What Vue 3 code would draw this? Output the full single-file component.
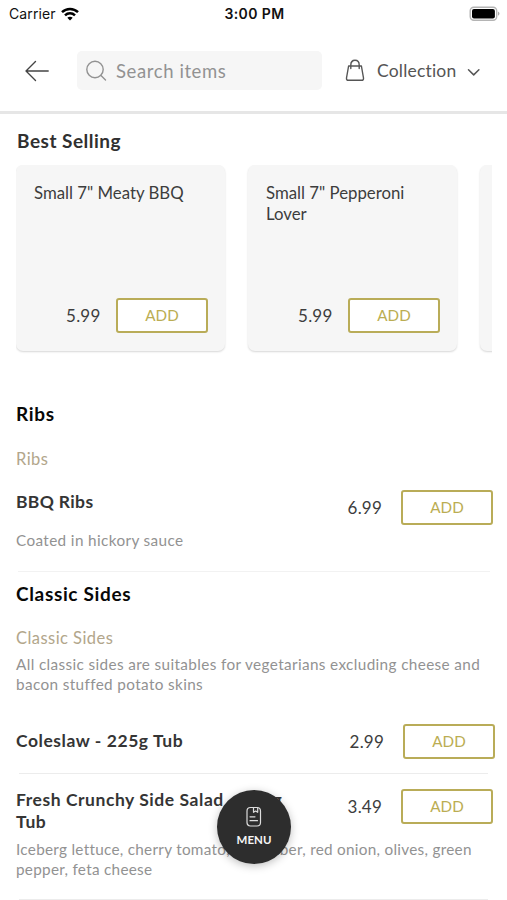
<script setup>
const bestSelling = [
  { name: 'Small 7" Meaty BBQ', price: '5.99' },
  { name: 'Small 7" Pepperoni Lover', price: '5.99' },
]
</script>

<template>
  <div class="screen">
    <div class="status">
      <div class="carrier">
        <span>Carrier</span>
        <svg class="wifi" width="18" height="14" viewBox="0 0 18 14">
          <g fill="none" stroke="#000" stroke-width="2.5">
            <path d="M1 5.1C5.5.8 12.500.8 17 5.100" />
            <path d="M4 8.300C6.800 5.600 11.200 5.600 14 8.300" />
          </g>
          <path d="M9 13.600 6.300 10.800C7.800 9.400 10.200 9.400 11.700 10.800Z" />
        </svg>
      </div>
      <div class="time">3:00 PM</div>
      <div class="power">
        <svg width="31" height="16" viewBox="0 0 31 16">
          <rect x="1.200" y="1.200" width="26.500" height="13" rx="3.600" fill="#fff" stroke="#b4b4b4" stroke-width="1.400" />
          <rect x="3" y="3" width="22.900" height="9.400" rx="2" />
          <path d="M29 5.600C31 6.400 31 9 29 9.800Z" fill="#aaa" />
        </svg>
      </div>
    </div>

    <header class="bar">
      <svg class="back" width="26" height="24" viewBox="0 0 26 24" fill="none" stroke="#444" stroke-width="1.400" stroke-linecap="round" stroke-linejoin="round">
        <path d="M24.200 12H2M11.500 2.400 2 12l9.500 9.500" />
      </svg>
      <div class="search">
        <svg width="22" height="22" viewBox="0 0 22 22" fill="none" stroke="#929292" stroke-width="1.400" stroke-linecap="round">
          <circle cx="9" cy="9.500" r="8.200" />
          <path d="M15 15.400 19.500 19.900" />
        </svg>
        <span>Search items</span>
      </div>
      <div class="collection">
        <svg class="bag" width="20" height="24" viewBox="0 0 20 24" fill="none" stroke="#555" stroke-width="1.400" stroke-linecap="round" stroke-linejoin="round">
          <path d="M3.600 7H16.400L18.500 19Q18.700 21.300 16.700 21.300H3.300Q1.300 21.300 1.500 19Z" />
          <path d="M5.800 9.600V6C5.800-.4 14.200-.4 14.200 6V9.600" />
        </svg>
        <span class="mode">Collection</span>
        <svg class="chevron" width="14" height="9" viewBox="0 0 14 9" fill="none" stroke="#555" stroke-width="1.500" stroke-linecap="round" stroke-linejoin="round">
          <path d="m1.500 1.700 5.200 5.200 5.200-5.200" />
        </svg>
      </div>
    </header>

    <main>
      <h2 class="best">Best Selling</h2>
      <div class="cards">
        <article v-for="item in bestSelling" :key="item.name" class="card">
          <div class="card-name">{{ item.name }}</div>
          <div class="buy">
            <span class="price">{{ item.price }}</span>
            <button class="add">ADD</button>
          </div>
        </article>
        <article class="card"></article>
      </div>

      <section class="ribs">
        <h2>Ribs</h2>
        <h3>Ribs</h3>
        <div class="item">
          <div class="name bbq">BBQ Ribs</div>
          <div class="buy">
            <span class="price">6.99</span>
            <button class="add">ADD</button>
          </div>
        </div>
        <p class="desc coated">Coated in hickory sauce</p>
        <div class="divider faint"></div>
      </section>

      <section class="sides">
        <h2>Classic Sides</h2>
        <h3>Classic Sides</h3>
        <p class="desc about">All classic sides are suitables for vegetarians excluding cheese and<br>bacon stuffed potato skins</p>
        <div class="item coleslaw">
          <div class="name slaw">Coleslaw - 225g Tub</div>
          <div class="buy">
            <span class="price">2.99</span>
            <button class="add">ADD</button>
          </div>
        </div>
        <div class="divider"></div>
        <div class="item salad">
          <div class="name fresh">Fresh Crunchy Side Salad - 225g<br>Tub</div>
          <div class="buy">
            <span class="price">3.49</span>
            <button class="add">ADD</button>
          </div>
        </div>
        <p class="desc iceberg">Iceberg lettuce, cherry tomato, cucumber, red onion, olives, green<br>pepper, feta cheese</p>
        <div class="divider"></div>
      </section>
    </main>

    <button class="menu">
      <svg width="16" height="22" viewBox="0 0 16 22" fill="none" stroke="#ddd" stroke-width="1.200" stroke-linecap="round" stroke-linejoin="round">
        <rect x="1" y="1.500" width="13.500" height="18.500" rx="3.500" />
        <path d="M7.500 1.700V6.300L9.600 5 11.700 6.300V2M4 10.800H9M4 14.700H11.500" />
      </svg>
      <span>MENU</span>
    </button>
  </div>
</template>

<style>
body {
  margin: 0;
  background: #fff;
}
</style>

<style scoped>
.screen {
  position: relative;
  box-sizing: border-box;
  width: 507px;
  height: 900px;
  overflow: hidden;
  background: #fff;
  color: #3d3d3d;
  font-family: Lato, sans-serif;
  font-variant-ligatures: none;
}
h2, h3, p {
  margin: 0;
}
svg {
  display: block;
  flex: none;
}
button {
  font-family: inherit;
  padding: 0;
}
.status {
  display: grid;
  grid-template-columns: 1fr auto 1fr;
  align-items: center;
  height: 27px;
  padding: 0 7px 0 9px;
  font-family: Inter, sans-serif;
  font-size: 14px;
  color: #111;
}
.carrier {
  display: flex;
  align-items: center;
  gap: 5px;
  letter-spacing: 0.1px;
}
.time {
  font-weight: 600;
  letter-spacing: 0.4px;
}
.power {
  display: flex;
  justify-content: flex-end;
}
.bar {
  box-sizing: border-box;
  display: flex;
  align-items: center;
  height: 87px;
  padding: 3px 0 0 24px;
  border-bottom: 3px solid #e6e6e6;
}
.search {
  box-sizing: border-box;
  display: flex;
  align-items: center;
  gap: 8px;
  width: 245px;
  height: 39px;
  margin-left: 27px;
  padding-left: 9px;
  border-radius: 5px;
  background: #f6f6f6;
  color: #929292;
  font-size: 18.500px;
  letter-spacing: 0.6px;
}
.collection {
  display: flex;
  align-items: center;
  margin-left: 23px;
  font-size: 17.500px;
  letter-spacing: 0.2px;
  color: #555;
}
.mode {
  width: 81px;
  margin-left: 12px;
}
.chevron {
  margin: 3px 0 0 9px;
}
main {
  padding: 0 15px 0 16px;
}
h2 {
  color: #080808;
  font-size: 19px;
  line-height: 24px;
  font-weight: 700;
  letter-spacing: 0.65px;
}
.best {
  padding: 15px 0 12px 1px;
  color: #303030;
  letter-spacing: 0.5px;
}
.cards {
  display: flex;
  gap: 23px;
  height: 189px;
  overflow: hidden;
}
.card {
  box-sizing: border-box;
  display: flex;
  flex: 0 0 209px;
  flex-direction: column;
  justify-content: space-between;
  height: 186px;
  padding: 17px 17px 18px 18px;
  border-radius: 7px;
  background: #f6f6f6;
  box-shadow: 0 1px 2px rgba(0, 0, 0, 0.16);
}
.card-name {
  font-size: 16.800px;
  line-height: 21px;
}
.buy {
  display: flex;
  align-items: center;
  justify-content: flex-end;
  height: 35px;
}
.price {
  margin-right: 15.500px;
  font-size: 17px;
  letter-spacing: 0.2px;
}
.add {
  box-sizing: border-box;
  width: 92px;
  height: 35px;
  padding-bottom: 1px;
  border: 2px solid #b9ac58;
  border-radius: 3px;
  background: #fff;
  color: #bbad52;
  font-size: 15.200px;
}
h3 {
  color: #b2a68b;
  font-size: 16.500px;
  line-height: 22px;
  font-weight: 400;
  letter-spacing: 0.45px;
}
.ribs {
  padding-top: 48px;
}
.ribs h3 {
  padding-top: 22px;
}
.item {
  display: flex;
  justify-content: space-between;
  align-items: flex-start;
}
.ribs .item {
  margin-right: -1px;
  padding-top: 20px;
}
.item .price {
  margin-right: 19px;
}
.name {
  color: #353535;
  font-size: 17.500px;
  line-height: 22px;
  font-weight: 700;
  letter-spacing: 0.55px;
}
.bbq {
  padding-top: 1px;
  letter-spacing: 0.35px;
}
.desc {
  color: #929292;
  font-size: 15.300px;
  line-height: 20px;
  letter-spacing: 0.37px;
  white-space: nowrap;
}
.coated {
  padding: 5px 0 21px;
}
.divider {
  height: 1px;
  margin: 0 4px 0 3px;
  background: #ececec;
}
.faint {
  margin: 0 2px;
  background: #f2f2f2;
}
.sides h2 {
  padding-top: 10px;
}
.sides h3 {
  padding-top: 21px;
}
.about {
  padding-top: 5px;
}
.item.coleslaw {
  align-items: center;
  height: 48px;
  margin-right: -3px;
  padding: 23px 0 8px;
}
.salad {
  margin-right: -1px;
  padding-top: 15px;
}
.iceberg {
  height: 60px;
  box-sizing: content-box;
  padding-top: 6px;
  letter-spacing: 0.28px;
}
.menu {
  position: absolute;
  left: 217px;
  top: 790px;
  display: flex;
  flex-direction: column;
  align-items: center;
  width: 74px;
  height: 74px;
  padding-top: 16px;
  border: 0;
  border-radius: 50%;
  background: #2d2d2d;
  box-shadow: 0 2px 8px rgba(0, 0, 0, 0.25);
  box-sizing: border-box;
  color: #f5f5f5;
  font-size: 11.500px;
  font-weight: 700;
  gap: 5px;
}
</style>
